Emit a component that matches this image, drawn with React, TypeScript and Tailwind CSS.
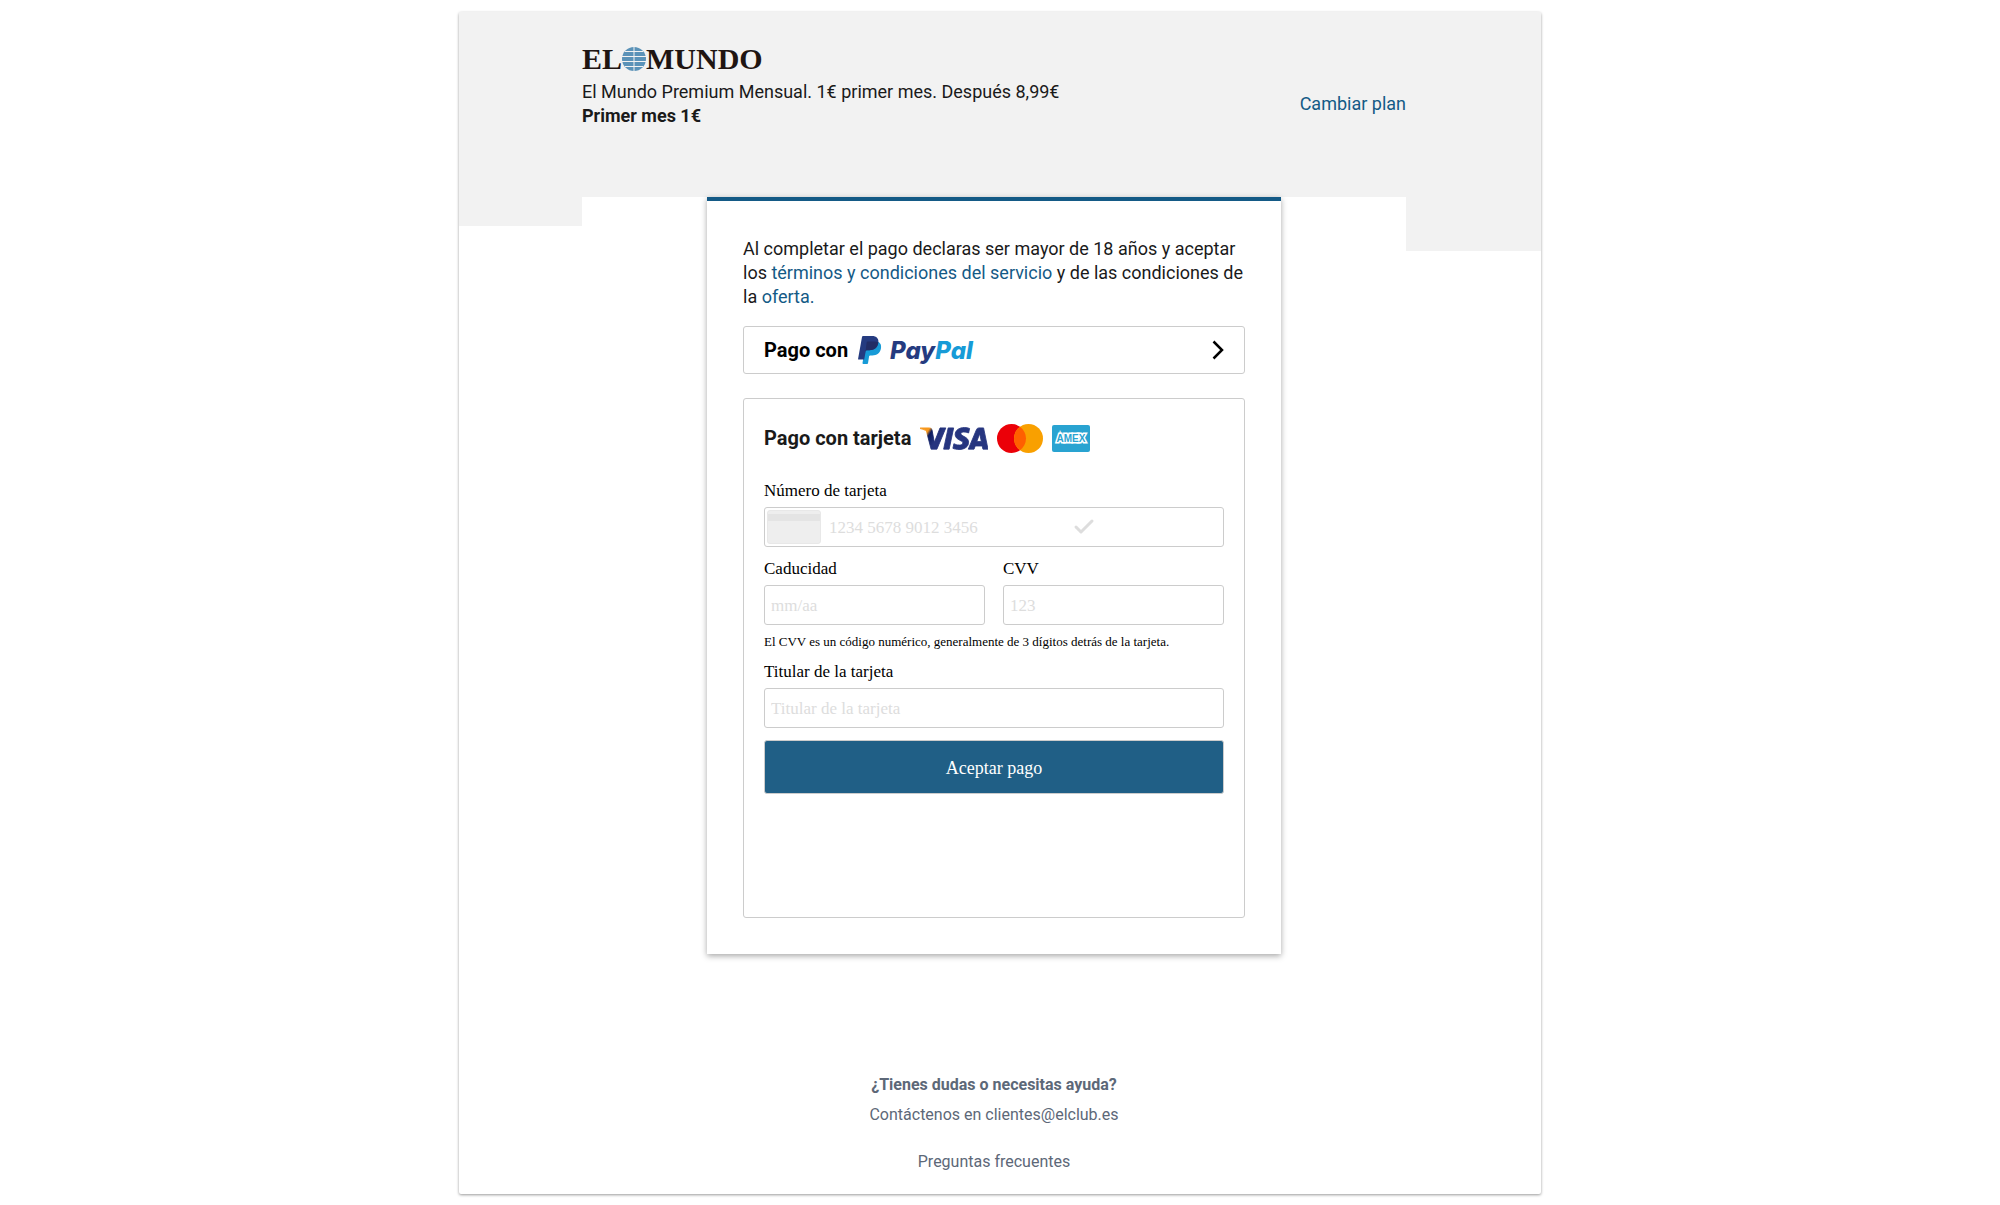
import type { ComponentProps } from "react";
import { Check } from "lucide-react";
import { SiVisa } from "react-icons/si";

const serif = "font-['Liberation_Serif',serif]";

function ElMundoLogo() {
  return (
    <h1
      aria-label="El Mundo"
      className={`flex h-[30px] items-center text-[30px] leading-[30px] font-bold text-[#1f1512] ${serif}`}
    >
      <span>EL</span>
      <svg viewBox="0 0 24 24" className="h-6 w-6" aria-hidden="true">
        <circle cx="12" cy="12" r="12" fill="#5a92b8" />
        <path
          d="M12 0v24M3 4.5h18M0 9.5h24M0 14.5h24M3 19.5h18"
          stroke="#f2f2f2"
          strokeWidth="1"
          fill="none"
        />
      </svg>
      <span>MUNDO</span>
    </h1>
  );
}

function PaypalLogo() {
  return (
    <span className="flex items-center gap-2">
      <svg viewBox="0 0 24 28" className="h-7 w-6" aria-hidden="true">
        <path
          d="M8 5.5h9.5c4.300 0 6.200 2.800 5.500 6.700-.9 4.800-4.200 7.200-8.700 7.200h-2.200c-.6 0-.9.4-1 .9L10 27.200c-.1.500-.4.800-.9.800H5.200c-.6 0-.8-.4-.7-.9z"
          fill="#179bd7"
        />
        <path
          d="M4 .9C4.100.300 4.500 0 5 0h8.800c4.900 0 7.300 2.700 6.500 7-.9 4.900-4.300 7.200-8.900 7.200H8.800c-.6 0-1 .4-1.100 1L6.200 23.600H.8c-.6 0-.8-.4-.7-.9z"
          fill="#253b80"
        />
        <path
          d="M8.600 6.700c.1-.7.500-1.100 1.200-1.100h7c1.300 0 2.400.2 3.400.7v.7c-.9 4.900-4.300 7.200-8.900 7.200H8.800c-.6 0-1 .4-1.100 1l-.3 1.500z"
          fill="#222d65"
        />
      </svg>
      <span className="pt-0.5 font-[Inter,sans-serif] text-[24px] leading-7 font-extrabold italic text-[#253b80]">
        Pay<span className="text-[#179bd7]">Pal</span>
      </span>
    </span>
  );
}

function VisaLogo() {
  return (
    <>
      <svg className="absolute h-0 w-0" aria-hidden="true">
        <defs>
          <linearGradient id="visa" gradientUnits="userSpaceOnUse" x1="0" y1="8" x2="6" y2="12">
            <stop offset="0.42" stopColor="#f7981d" />
            <stop offset="0.58" stopColor="#0b1a5c" />
            <stop offset="1" stopColor="#26357f" />
          </linearGradient>
        </defs>
      </svg>
      <SiVisa
        viewBox="0 8 24 8"
        fill="url(#visa)"
        stroke="url(#visa)"
        strokeWidth="0.3"
        title="Visa"
        className="h-[23px] w-[68px]"
      />
    </>
  );
}

function MastercardLogo() {
  return (
    <svg viewBox="0 0 46 29" className="h-[29px] w-[46px]" aria-label="Mastercard">
      <circle cx="14.500" cy="14.500" r="14.500" fill="#eb0008" />
      <circle cx="31.500" cy="14.500" r="14.500" fill="#f9a000" />
      <path d="M23 2.750a14.500 14.500 0 0 1 0 23.500a14.500 14.500 0 0 1 0-23.500z" fill="#ff5f00" />
    </svg>
  );
}

function AmexLogo() {
  return (
    <svg viewBox="0 0 38 27" className="h-[27px] w-[38px]" aria-label="American Express">
      <rect width="38" height="27" rx="2" fill="#29a3d1" />
      <text
        x="19"
        y="17"
        textAnchor="middle"
        fontFamily="Liberation Sans, sans-serif"
        fontWeight="700"
        fontSize="10"
        fill="#29a3d1"
        stroke="#fff"
        strokeWidth="3"
        paintOrder="stroke"
      >
        AMEX
      </text>
    </svg>
  );
}

type FieldProps = ComponentProps<"input"> & { id: string; label: string };

function Field({ id, label, ...props }: FieldProps) {
  return (
    <div className="min-w-0 flex-1">
      <label htmlFor={id} className="block h-[38px] pt-3 text-[17px] leading-5">
        {label}
      </label>
      <input
        id={id}
        className="block h-10 w-full rounded-[3px] border border-[#ccc] px-1.5 pt-0.5 text-[17px] placeholder:text-[#ddd]"
        {...props}
      />
    </div>
  );
}

function CardForm() {
  return (
    <form className={`text-black ${serif}`} onSubmit={(e) => e.preventDefault()}>
      <label htmlFor="card-number" className="block h-[26px] text-[17px] leading-5">
        Número de tarjeta
      </label>
      <div className="flex h-10 items-center rounded-[3px] border border-[#ccc] px-0.5">
        <div className="h-[34px] w-[54px] shrink-0 rounded-[3px] border border-[#e8e8e8] bg-[#eee] pt-[3px]">
          <div className="h-[7px] bg-[#e4e4e4]" />
        </div>
        <input
          id="card-number"
          placeholder="1234 5678 9012 3456"
          className="ml-2 h-full w-[243px] min-w-0 pt-0.5 text-[17px] placeholder:text-[#ddd]"
        />
        <Check className="h-6 w-6 text-[#ddd]" strokeWidth={3} aria-hidden="true" />
      </div>
      <div className="flex gap-[18px]">
        <Field id="expiry" label="Caducidad" placeholder="mm/aa" />
        <Field id="cvv" label="CVV" placeholder="123" />
      </div>
      <p className="pt-[9px] text-[13px] leading-4">
        El CVV es un código numérico, generalmente de 3 dígitos detrás de la tarjeta.
      </p>
      <Field id="holder" label="Titular de la tarjeta" placeholder="Titular de la tarjeta" />
      <button
        type="submit"
        className="mt-3 h-[54px] w-full rounded-[3px] border border-[#ccc] bg-[#205f86] pt-0.5 text-[18px] text-white"
      >
        Aceptar pago
      </button>
    </form>
  );
}

export default function App() {
  return (
    <div className="min-h-screen bg-white pt-3 pb-2.5 font-[Roboto,sans-serif] text-[18px] leading-6 text-[#1a1a1a]">
      <div className="mx-auto flex max-w-[1082px] items-start rounded-[2px] shadow-[0_1px_3px_rgba(0,0,0,0.4)]">
        <div className="h-[214px] w-[123px] bg-[#f2f2f2]" />
        <div className="min-w-0 flex-1">
          <header className="flex h-[185px] items-start justify-between bg-[#f2f2f2] pt-8">
            <div>
              <ElMundoLogo />
              <p className="pt-1.5">El Mundo Premium Mensual. 1€ primer mes. Después 8,99€</p>
              <p className="font-bold">Primer mes 1€</p>
            </div>
            <a href="#plan" className="pt-12 text-[#145a86]">
              Cambiar plan
            </a>
          </header>

          <main className="mx-auto max-w-[574px] border-t-4 border-[#145a86] bg-white p-9 shadow-[0_2px_6px_rgba(0,0,0,0.35)]">
            <p>
              Al completar el pago declaras ser mayor de 18 años y aceptar los{" "}
              <a href="#terminos" className="text-[#145a86]">
                términos y condiciones del servicio
              </a>{" "}
              y de las condiciones de la{" "}
              <a href="#oferta" className="text-[#145a86]">
                oferta.
              </a>
            </p>

            <button
              type="button"
              className="mt-[17px] flex h-12 w-full items-center gap-2.5 rounded-[3px] border border-[#ccc] px-5 text-[20px] font-bold text-black"
            >
              Pago con
              <PaypalLogo />
              <svg viewBox="0 0 12 20" className="ml-auto h-5 w-3" aria-hidden="true">
                <path d="M1.500 1.500L10 10l-8.500 8.500" fill="none" stroke="#000" strokeWidth="2.500" />
              </svg>
            </button>

            <section className="mt-6 min-h-[520px] rounded-[3px] border border-[#ccc] px-5 pt-6">
              <h2 className="mb-7 flex h-[30px] items-center gap-[9px] text-[20px] font-bold">
                Pago con tarjeta
                <VisaLogo />
                <MastercardLogo />
                <AmexLogo />
              </h2>
              <CardForm />
            </section>
          </main>

          <footer className="pt-[119px] pb-5 text-center text-[16px] text-[#5d6878]">
            <p className="font-bold">¿Tienes dudas o necesitas ayuda?</p>
            <p className="pt-1.5">
              Contáctenos en <a href="mailto:clientes@elclub.es">clientes@elclub.es</a>
            </p>
            <p className="pt-[23px]">
              <a href="#faq">Preguntas frecuentes</a>
            </p>
          </footer>
        </div>
        <div className="h-[239px] w-[135px] bg-[#f2f2f2]" />
      </div>
    </div>
  );
}
